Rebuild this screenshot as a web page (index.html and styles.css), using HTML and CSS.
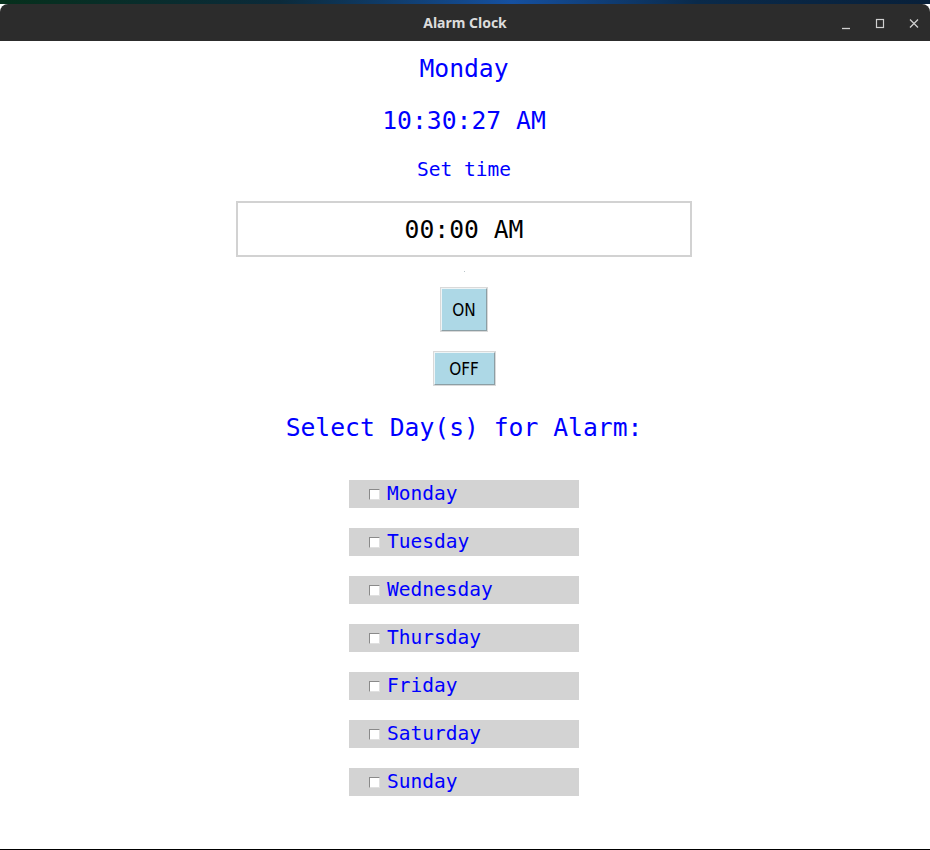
FILE: index.html
```html
<!DOCTYPE html>
<html>
<head>
<meta charset="utf-8">
<title>Alarm Clock</title>
<link rel="stylesheet" href="styles.css">
</head>
<body>
<div class="desktop"></div>
<div class="titlebar">
  <span class="title">Alarm Clock</span>
  <div class="controls">
    <svg class="ctl" width="12" height="12" viewBox="0 0 12 12"><path d="M2 10.5h8" stroke="#d0d0d0" stroke-width="1.3" fill="none"/></svg>
    <svg class="ctl" width="12" height="12" viewBox="0 0 12 12"><rect x="2.5" y="1.5" width="7" height="8" stroke="#d0d0d0" stroke-width="1.2" fill="none"/></svg>
    <svg class="ctl" width="12" height="12" viewBox="0 0 12 12"><path d="M2 1.5l8 8M10 1.5l-8 8" stroke="#d0d0d0" stroke-width="1.3" fill="none"/></svg>
  </div>
</div>
<main class="app">
  <div class="big day">Monday</div>
  <div class="big clock">10:30:27 AM</div>
  <div class="settime">Set time</div>
  <div class="entry">00:00 AM</div>
  <div class="dot"></div>
  <button class="btn btn-on">ON</button>
  <button class="btn btn-off">OFF</button>
  <div class="big select">Select Day(s) for Alarm:</div>
  <div class="days">
    <label class="dayrow"><span class="box"></span><span class="dname">Monday</span></label>
    <label class="dayrow"><span class="box"></span><span class="dname">Tuesday</span></label>
    <label class="dayrow"><span class="box"></span><span class="dname">Wednesday</span></label>
    <label class="dayrow"><span class="box"></span><span class="dname">Thursday</span></label>
    <label class="dayrow"><span class="box"></span><span class="dname">Friday</span></label>
    <label class="dayrow"><span class="box"></span><span class="dname">Saturday</span></label>
    <label class="dayrow"><span class="box"></span><span class="dname">Sunday</span></label>
  </div>
</main>
<div class="bottomline"></div>
</body>
</html>
```
FILE: styles.css
```css
html, body {
  margin: 0;
  padding: 0;
  width: 930px;
  height: 850px;
  overflow: hidden;
  background: #ffffff;
}
.desktop {
  height: 4px;
  background: linear-gradient(90deg, #06301c 0%, #0b2a3a 30%, #1550a0 55%, #0a2a4a 75%, #08203a 100%);
}
.titlebar {
  height: 37px;
  background: #2c2c2c;
  border-radius: 8px 8px 0 0;
  display: flex;
  align-items: center;
  justify-content: center;
  position: relative;
}
.title {
  font-family: "Noto Sans", "DejaVu Sans", sans-serif;
  font-weight: bold;
  font-size: 14px;
  color: #dcdcdc;
  margin-top: -1px;
}
.controls {
  position: absolute;
  right: 10px;
  top: 14px;
  display: flex;
  gap: 22px;
}
.ctl { display: block; }
.app {
  box-sizing: border-box;
  height: 808px;
  padding-right: 2px;
  background: #ffffff;
  display: flex;
  flex-direction: column;
  align-items: center;
}
.big {
  font-family: "DejaVu Sans Mono", monospace;
  font-size: 24.7px;
  color: #0000ff;
  height: 30px;
  line-height: 30px;
  white-space: pre;
}
.day { margin-top: 13px; }
.clock { margin-top: 22px; }
.settime {
  font-family: "DejaVu Sans Mono", monospace;
  font-size: 19.5px;
  color: #0000ff;
  height: 24px;
  line-height: 24px;
  margin-top: 22px;
}
.entry {
  margin-top: 19px;
  box-sizing: border-box;
  width: 456px;
  height: 56px;
  border: 2px solid #d2d2d2;
  font-family: "DejaVu Sans Mono", monospace;
  font-size: 24.7px;
  color: #000000;
  display: flex;
  align-items: center;
  justify-content: center;
}
.dot {
  width: 1px;
  height: 1px;
  background: #b8c4c8;
  margin-top: 14px;
}
.btn {
  box-sizing: border-box;
  background: #add8e6;
  border: 1px solid;
  border-color: #eef4f6 #8c9ea4 #8c9ea4 #eef4f6;
  outline: 1px solid #d9d9d9;
  font-family: "DejaVu Sans Condensed", "DejaVu Sans", sans-serif;
  font-size: 17px;
  color: #000000;
  padding: 0;
  margin: 0;
  display: flex;
  align-items: center;
  justify-content: center;
}
.btn-on {
  width: 46px;
  height: 43px;
  margin-top: 16px;
}
.btn-off {
  width: 61px;
  height: 33px;
  margin-top: 21px;
}
.select { margin-top: 28px; }
.days {
  margin-top: 37px;
  display: flex;
  flex-direction: column;
  gap: 20px;
}
.dayrow {
  box-sizing: border-box;
  width: 230px;
  height: 28px;
  background: #d3d3d3;
  display: flex;
  align-items: center;
  padding-left: 20px;
}
.box {
  box-sizing: border-box;
  width: 11px;
  height: 11px;
  background: #ffffff;
  border: 1px solid;
  border-color: #8a8a8a #e0e0e0 #e0e0e0 #8a8a8a;
  margin-right: 7px;
}
.dname {
  font-family: "DejaVu Sans Mono", monospace;
  font-size: 19.5px;
  color: #0000ff;
  line-height: 24px;
}
.bottomline {
  height: 1px;
  background: #000000;
}
```
